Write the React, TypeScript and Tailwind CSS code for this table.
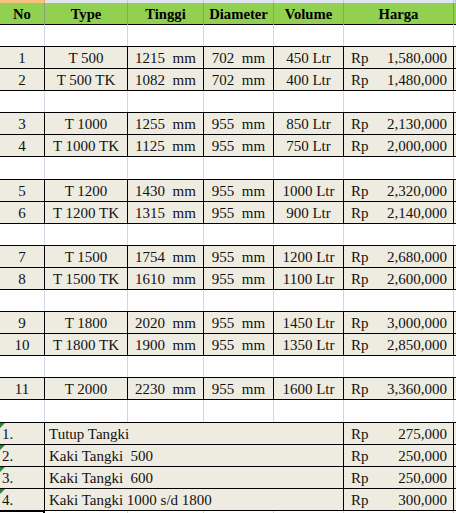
import React from 'react';

const COLS = 'grid grid-cols-[45px_83px_76px_70px_70px_110px]';

type Tank = { no: number; type: string; tinggi: number; diameter: number; volume: number; harga: string };

const groups: Tank[][] = [
    [
        { no: 1, type: 'T 500', tinggi: 1215, diameter: 702, volume: 450, harga: '1,580,000' },
        { no: 2, type: 'T 500 TK', tinggi: 1082, diameter: 702, volume: 400, harga: '1,480,000' },
    ],
    [
        { no: 3, type: 'T 1000', tinggi: 1255, diameter: 955, volume: 850, harga: '2,130,000' },
        { no: 4, type: 'T 1000 TK', tinggi: 1125, diameter: 955, volume: 750, harga: '2,000,000' },
    ],
    [
        { no: 5, type: 'T 1200', tinggi: 1430, diameter: 955, volume: 1000, harga: '2,320,000' },
        { no: 6, type: 'T 1200 TK', tinggi: 1315, diameter: 955, volume: 900, harga: '2,140,000' },
    ],
    [
        { no: 7, type: 'T 1500', tinggi: 1754, diameter: 955, volume: 1200, harga: '2,680,000' },
        { no: 8, type: 'T 1500 TK', tinggi: 1610, diameter: 955, volume: 1100, harga: '2,600,000' },
    ],
    [
        { no: 9, type: 'T 1800', tinggi: 2020, diameter: 955, volume: 1450, harga: '3,000,000' },
        { no: 10, type: 'T 1800 TK', tinggi: 1900, diameter: 955, volume: 1350, harga: '2,850,000' },
    ],
    [{ no: 11, type: 'T 2000', tinggi: 2230, diameter: 955, volume: 1600, harga: '3,360,000' }],
];

const extras = [
    { no: '1.', name: 'Tutup Tangki', harga: '275,000' },
    { no: '2.', name: 'Kaki Tangki  500', harga: '250,000' },
    { no: '3.', name: 'Kaki Tangki  600', harga: '250,000' },
    { no: '4.', name: 'Kaki Tangki 1000 s/d 1800', harga: '300,000' },
];

function EmptyRow({ tall = false }: { tall?: boolean }) {
    return (
        <div className={`${COLS} ${tall ? 'h-[23px]' : 'h-[22px]'} border-b border-black`}>
            {[0, 1, 2, 3, 4, 5].map(i => (
                <div key={i} className="border-r border-[#d0d7e5]" />
            ))}
        </div>
    );
}

function Price({ value }: { value: string }) {
    return (
        <div className="flex items-center justify-between pl-[7px] pr-[6px] border-r border-black">
            <span>Rp</span>
            <span>{value}</span>
        </div>
    );
}

export default function App() {
    return (
        <div className="w-[456px] h-[513px] bg-white overflow-hidden font-['Liberation_Serif','Times_New_Roman',serif] text-[15px] text-[#111]">
            {/* column header strip */}
            <div className="grid grid-cols-[45px_83px_76px_70px_70px_110px_1fr] h-[3px]">
                <div className="bg-[#f6c27f] border-r border-[#e0a860]" />
                {[0, 1, 2, 3, 4, 5].map(i => (
                    <div key={i} className="bg-[#dfe6f0] border-r border-[#b9c8da]" />
                ))}
            </div>

            {/* header */}
            <div className={`${COLS} h-[22px] bg-[#92d050] border-b border-black text-[14.67px] font-bold text-black`}>
                {['No', 'Type', 'Tinggi', 'Diameter', 'Volume', 'Harga'].map((h, i) => (
                    <div
                        key={h}
                        className={`flex items-center justify-center border-r ${i === 5 ? 'border-[#7aa64a]' : 'border-[#8aa27a]'}`}
                    >
                        {h}
                    </div>
                ))}
            </div>

            {groups.map((group, gi) => (
                <React.Fragment key={gi}>
                    <EmptyRow tall={gi === 2} />
                    {group.map(t => (
                        <div key={t.no} className={`${COLS} h-[22px] bg-[#eeece1] border-b border-black`}>
                            <div className="flex items-center justify-center border-r border-black">{t.no}</div>
                            <div className="flex items-center justify-center border-r border-black">{t.type}</div>
                            <div className="flex items-center justify-center border-r border-black whitespace-pre">
                                {`${t.tinggi}  mm`}
                            </div>
                            <div className="flex items-center justify-center border-r border-black whitespace-pre">
                                {`${t.diameter}  mm`}
                            </div>
                            <div className="flex items-center justify-center border-r border-black">{t.volume} Ltr</div>
                            <Price value={t.harga} />
                        </div>
                    ))}
                </React.Fragment>
            ))}

            <EmptyRow tall />

            {/* accessories */}
            {extras.map(e => (
                <div key={e.no} className="grid grid-cols-[45px_299px_110px] h-[22px] bg-[#eeece1] border-b border-black">
                    <div className="relative flex items-center pl-[2px] border-r border-black">
                        <span className="absolute left-0 top-0 w-0 h-0 border-t-[5px] border-r-[5px] border-t-[#1e8a34] border-r-transparent" />
                        {e.no}
                    </div>
                    <div className="flex items-center pl-[4px] border-r border-black whitespace-pre">{e.name}</div>
                    <Price value={e.harga} />
                </div>
            ))}

            {/* active cell edge below */}
            <div className={`${COLS} h-[3px]`}>
                <div className="border-t border-r-2 border-black" />
                {[0, 1, 2, 3, 4].map(i => (
                    <div key={i} className="border-r border-[#d0d7e5]" />
                ))}
            </div>
        </div>
    );
}
